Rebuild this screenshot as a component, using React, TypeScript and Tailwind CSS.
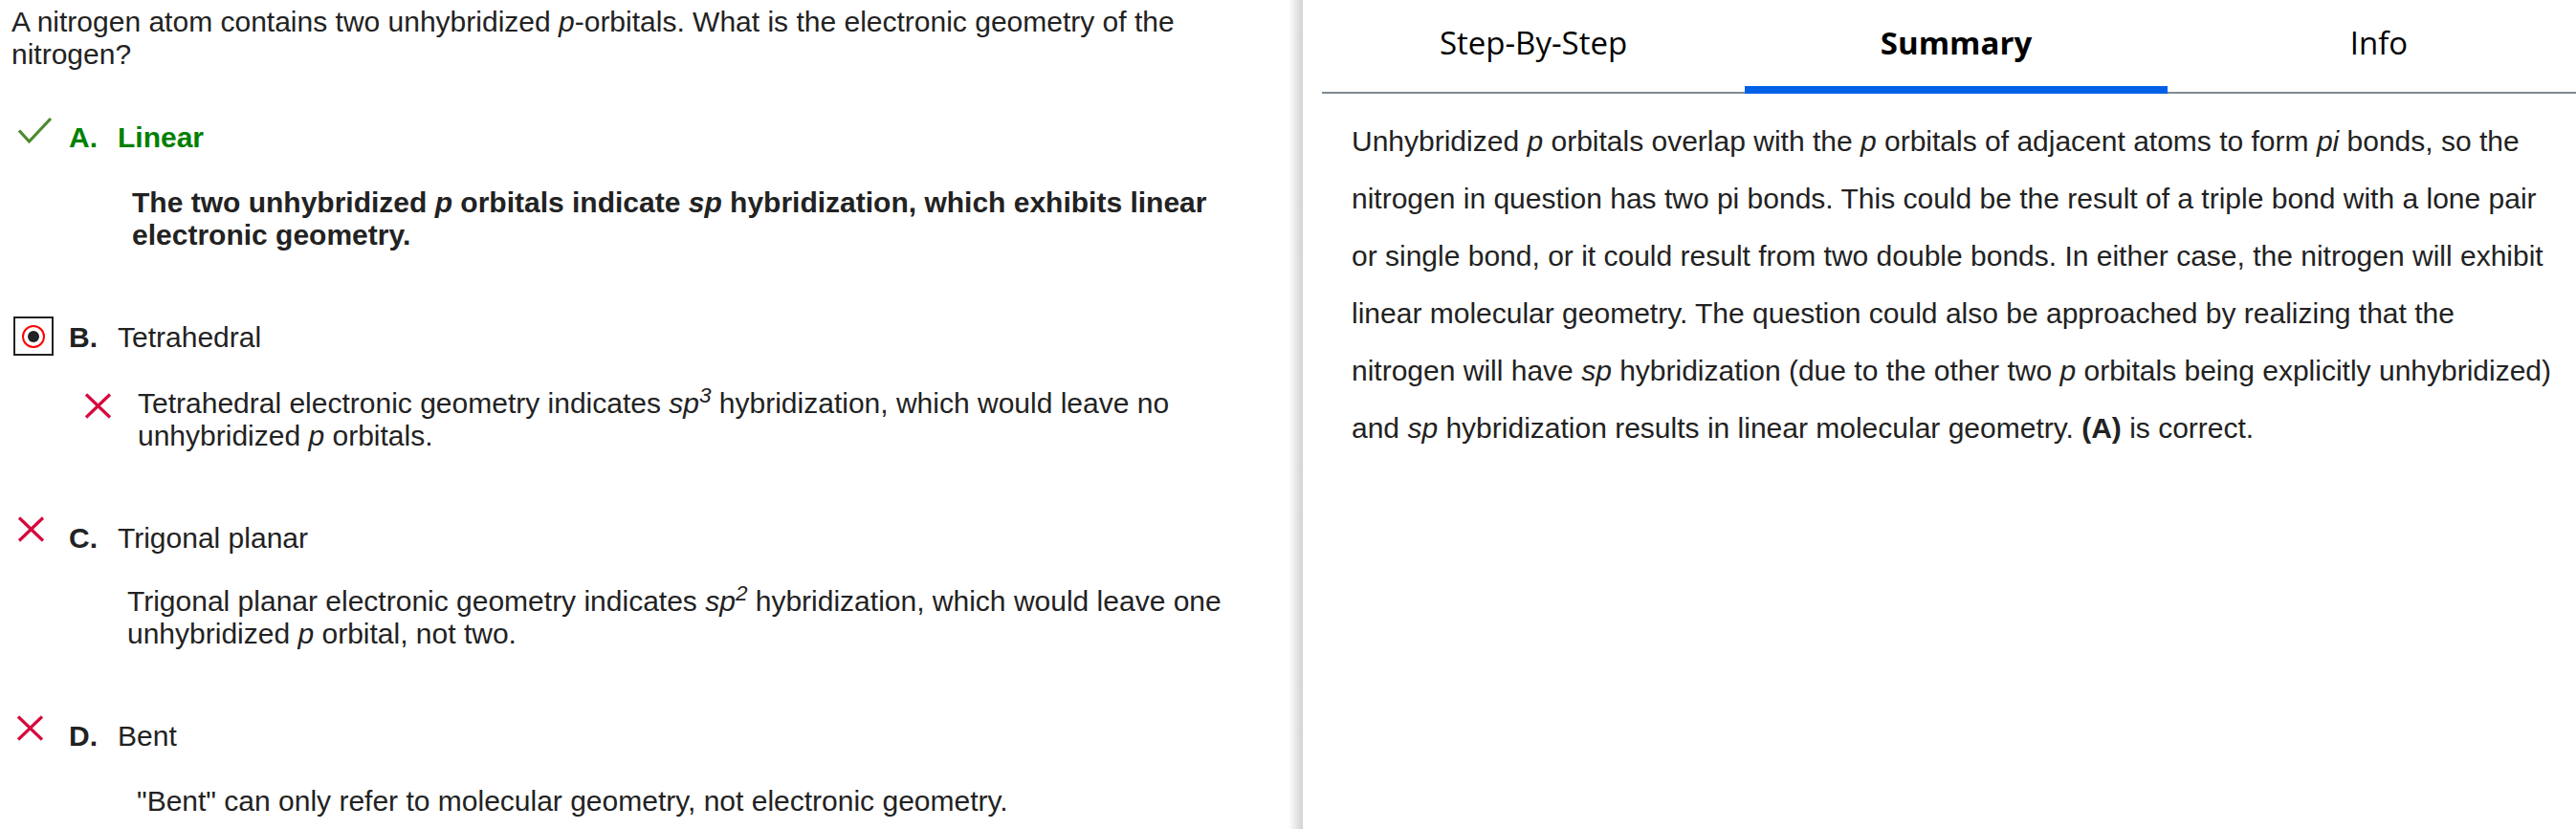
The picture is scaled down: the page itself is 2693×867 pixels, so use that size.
export default function App() {
  return (
    <div className="flex h-[867px] w-full overflow-hidden bg-white font-['Liberation_Sans',Arial,sans-serif] text-[#222]">
      <div className="w-[1347px] flex-none pr-[47px] pt-[6px] text-[30px] leading-[34px]">
        <p className="pl-[12px]">
          A nitrogen atom contains two unhybridized <i>p</i>-orbitals. What is the electronic geometry of the nitrogen?
        </p>

        <div className="mt-[53px]">
          <div className="flex items-start">
            <div className="w-[72px] flex-none">
              <Check />
            </div>
            <span className="w-[51px] flex-none font-bold text-[#008000]">A.</span>
            <span className="font-bold text-[#008000]">Linear</span>
          </div>
          <p className="mt-[34px] pl-[138px] font-bold">
            The two unhybridized <i>p</i> orbitals indicate <i>sp</i> hybridization, which exhibits linear electronic geometry.
          </p>
        </div>

        <div className="mt-[73px]">
          <div className="flex items-start">
            <div className="w-[72px] flex-none">
              <Selected />
            </div>
            <span className="w-[51px] flex-none font-bold">B.</span>
            <span>Tetrahedral</span>
          </div>
          <div className="mt-[33px] flex items-start pl-[88px]">
            <Cross className="mt-[6px] mr-[27px] flex-none" />
            <p>
              Tetrahedral electronic geometry indicates{" "}
              <i>
                sp<sup>3</sup>
              </i>{" "}
              hybridization, which would leave no unhybridized <i>p</i> orbitals.
            </p>
          </div>
        </div>

        <div className="mt-[73px]">
          <div className="flex items-start">
            <div className="w-[72px] flex-none">
              <Cross className="ml-[18px] -mt-[6px]" />
            </div>
            <span className="w-[51px] flex-none font-bold">C.</span>
            <span>Trigonal planar</span>
          </div>
          <p className="mt-[32px] pl-[133px]">
            Trigonal planar electronic geometry indicates{" "}
            <i>
              sp<sup>2</sup>
            </i>{" "}
            hybridization, which would leave one unhybridized <i>p</i> orbital, not two.
          </p>
        </div>

        <div className="mt-[73px]">
          <div className="flex items-start">
            <div className="w-[72px] flex-none">
              <Cross className="ml-[17px] -mt-[5px]" />
            </div>
            <span className="w-[51px] flex-none font-bold">D.</span>
            <span>Bent</span>
          </div>
          <p className="mt-[34px] pl-[143px]">
            "Bent" can only refer to molecular geometry, not electronic geometry.
          </p>
        </div>
      </div>

      <div className="w-[15px] flex-none bg-linear-to-r from-white to-[#d2d2d2]" />

      <div className="min-w-0 flex-1 pl-[20px]">
        <div className="flex border-b-2 border-[#7f8a93] font-['Open_Sans',sans-serif] text-[33px] leading-[45px] text-black">
          <Tab label="Step-By-Step" />
          <Tab label="Summary" active />
          <Tab label="Info" />
        </div>
        <p className="mt-[20px] pl-[31px] pr-[18px] text-[30px] leading-[60px]">
          Unhybridized <i>p</i> orbitals overlap with the <i>p</i> orbitals of adjacent atoms to form <i>pi</i> bonds, so
          the nitrogen in question has two pi bonds. This could be the result of a triple bond with a lone pair or
          single bond, or it could result from two double bonds. In either case, the nitrogen will exhibit linear
          molecular geometry. The question could also be approached by realizing that the nitrogen will have{" "}
          <i>sp</i> hybridization (due to the other two <i>p</i> orbitals being explicitly unhybridized) and{" "}
          <i>sp</i> hybridization results in linear molecular geometry. <b>(A)</b> is correct.
        </p>
      </div>
    </div>
  );
}

function Tab({ label, active }: { label: string; active?: boolean }) {
  return (
    <div className="relative h-[96px] w-[442px] flex-none pt-[22px] text-center">
      <span className={active ? "font-bold" : ""}>{label}</span>
      {active && <div className="absolute right-0 -bottom-[2px] left-0 h-[8px] bg-[#0060e6]" />}
    </div>
  );
}

function Check() {
  return (
    <svg className="-mt-[5px] ml-[18px]" width="37" height="29" viewBox="0 0 37 29" fill="none">
      <path d="M2 14.5 L12.5 26 L35 2" stroke="#4a8a2e" strokeWidth="3.2" />
    </svg>
  );
}

function Cross({ className = "" }: { className?: string }) {
  return (
    <svg className={className} width="29" height="27" viewBox="0 0 29 27" fill="none">
      <path d="M2 1.5 L27 25.5 M27 1.5 L2 25.5" stroke="#d6093e" strokeWidth="3.2" />
    </svg>
  );
}

function Selected() {
  return (
    <div className="-mt-[5px] ml-[14px] flex h-[41px] w-[42px] items-center justify-center border-2 border-[#222]">
      <div className="flex h-[24px] w-[24px] items-center justify-center rounded-full border-2 border-[#ff0000]">
        <div className="h-[12px] w-[12px] rounded-full bg-[#222]" />
      </div>
    </div>
  );
}
